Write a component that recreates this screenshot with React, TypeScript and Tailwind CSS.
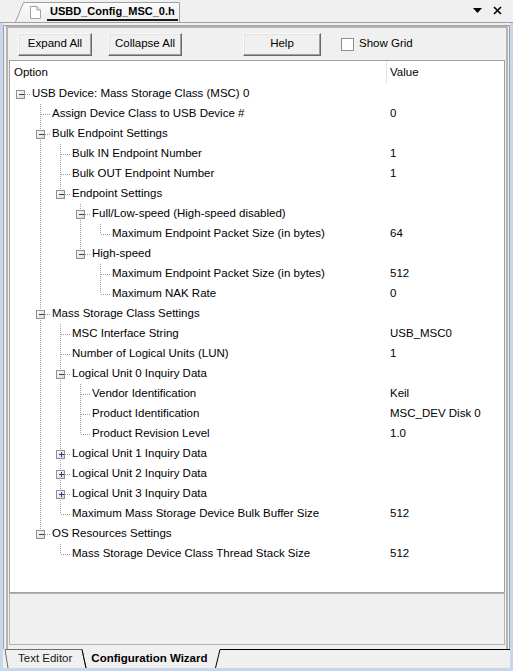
import React from "react";

type Row = { d: number; t: string; v?: string; e?: "-" | "+" };

const rows: Row[] = [
  { d: 0, t: "USB Device: Mass Storage Class (MSC) 0", e: "-" },
  { d: 1, t: "Assign Device Class to USB Device #", v: "0" },
  { d: 1, t: "Bulk Endpoint Settings", e: "-" },
  { d: 2, t: "Bulk IN Endpoint Number", v: "1" },
  { d: 2, t: "Bulk OUT Endpoint Number", v: "1" },
  { d: 2, t: "Endpoint Settings", e: "-" },
  { d: 3, t: "Full/Low-speed (High-speed disabled)", e: "-" },
  { d: 4, t: "Maximum Endpoint Packet Size (in bytes)", v: "64" },
  { d: 3, t: "High-speed", e: "-" },
  { d: 4, t: "Maximum Endpoint Packet Size (in bytes)", v: "512" },
  { d: 4, t: "Maximum NAK Rate", v: "0" },
  { d: 1, t: "Mass Storage Class Settings", e: "-" },
  { d: 2, t: "MSC Interface String", v: "USB_MSC0" },
  { d: 2, t: "Number of Logical Units (LUN)", v: "1" },
  { d: 2, t: "Logical Unit 0 Inquiry Data", e: "-" },
  { d: 3, t: "Vendor Identification", v: "Keil" },
  { d: 3, t: "Product Identification", v: "MSC_DEV Disk 0" },
  { d: 3, t: "Product Revision Level", v: "1.0" },
  { d: 2, t: "Logical Unit 1 Inquiry Data", e: "+" },
  { d: 2, t: "Logical Unit 2 Inquiry Data", e: "+" },
  { d: 2, t: "Logical Unit 3 Inquiry Data", e: "+" },
  { d: 2, t: "Maximum Mass Storage Device Bulk Buffer Size", v: "512" },
  { d: 1, t: "OS Resources Settings", e: "-" },
  { d: 2, t: "Mass Storage Device Class Thread Stack Size", v: "512" },
];

function hasNext(i: number): boolean {
  const d = rows[i].d;
  for (let j = i + 1; j < rows.length; j++) {
    if (rows[j].d < d) return false;
    if (rows[j].d === d) return true;
  }
  return false;
}

const meta = rows.map((r, i) => {
  const cols: boolean[] = [];
  for (let c = 1; c < r.d; c++) {
    let a = -1;
    for (let j = i - 1; j >= 0; j--) {
      if (rows[j].d === c) {
        a = j;
        break;
      }
    }
    cols.push(a >= 0 && hasNext(a));
  }
  return { ...r, next: hasNext(i), cols };
});

const LINE = "#a0a0a0";

function Connector({ m }: { m: (typeof meta)[number] }) {
  const w = 20 * (m.d + 1);
  const cx = 20 * m.d + 10;
  return (
    <svg width={w} height={20} className="shrink-0" shapeRendering="crispEdges">
      {m.cols.map((on, k) =>
        on ? (
          <line key={k} x1={20 * (k + 1) + 10.5} y1={0} x2={20 * (k + 1) + 10.5} y2={20} stroke={LINE} strokeDasharray="1 1" />
        ) : null
      )}
      {m.d > 0 && (
        <line x1={cx + 0.5} y1={0} x2={cx + 0.5} y2={m.next ? 20 : 10} stroke={LINE} strokeDasharray="1 1" />
      )}
      <line x1={cx + 1} y1={10.5} x2={w} y2={10.5} stroke={LINE} strokeDasharray="1 1" />
      {m.e && (
        <g>
          <defs>
            <linearGradient id="bx" x1="0" y1="0" x2="1" y2="1">
              <stop offset="0" stopColor="#ffffff" />
              <stop offset="1" stopColor="#d8d8d8" />
            </linearGradient>
          </defs>
          <rect x={cx - 3.5} y={6.5} width={8} height={8} fill="url(#bx)" stroke="#8e8f8f" />
          <line x1={cx - 1} y1={10.5} x2={cx + 4} y2={10.5} stroke="#1e3f7a" />
          {m.e === "+" && <line x1={cx + 1.5} y1={8} x2={cx + 1.5} y2={13} stroke="#1e3f7a" />}
        </g>
      )}
    </svg>
  );
}

function Btn({ children, w }: { children: React.ReactNode; w: string }) {
  return (
    <div
      className={`${w} flex h-[23px] items-center justify-center border border-t-[#f8f8f8] border-l-[#f8f8f8] border-r-[#696969] border-b-[#696969] bg-[#f0f0f0] shadow-[inset_-1px_-1px_0_#a0a0a0,inset_1px_1px_0_#e3e3e3]`}
    >
      {children}
    </div>
  );
}

export default function App() {
  return (
    <div
      className="relative flex h-[671px] w-[513px] flex-col overflow-hidden bg-[#f0f0f0] text-[11.5px] text-black"
      style={{ fontFamily: '"Liberation Sans", Arial, sans-serif' }}
    >
      {/* top tab strip */}
      <div className="relative flex h-[23px] shrink-0 items-end border-b border-[#a0a0a0] pl-[15px]">
        <div className="relative flex h-[20px] w-[165px] items-center pl-[15px]">
          <svg className="absolute left-0 top-0" width="165" height="20">
            <defs>
              <linearGradient id="tabg" x1="0" y1="0" x2="0" y2="1">
                <stop offset="0" stopColor="#fbfbfb" />
                <stop offset="1" stopColor="#eeeeee" />
              </linearGradient>
            </defs>
            <path d="M0.5 20 L8.5 0.5 L164.5 0.5 L164.5 20" fill="url(#tabg)" stroke="#a0a0a0" />
          </svg>
          <svg className="relative mr-[6px] shrink-0" width="11" height="13" viewBox="0 0 11 13">
            <path d="M0.5 0.5 H7 L10.5 4 V12.5 H0.5 Z" fill="#fff" stroke="#9aa3ae" />
            <path d="M7 0.5 V4 H10.5" fill="#e8edf3" stroke="#9aa3ae" />
          </svg>
          <span className="relative whitespace-nowrap border-b-2 border-[#1b1b1b] px-[3px] pb-[1px] text-[11px] font-bold leading-[14px]">
            USBD_Config_MSC_0.h
          </span>
        </div>
        <div className="absolute right-[11px] top-[6px] flex items-center gap-[11px]">
          <svg width="9" height="5" viewBox="0 0 9 5">
            <path d="M0 0 H9 L4.5 5 Z" fill="#000" />
          </svg>
          <svg width="9" height="9" viewBox="0 0 9 9">
            <path d="M1 1 L8 8 M8 1 L1 8" stroke="#000" strokeWidth="1.6" />
          </svg>
        </div>
      </div>

      {/* main panel */}
      <div className="flex flex-1 flex-col border-x-[3px] border-b-[3px] border-[#c8d7ee] pt-[2px]">
        <div className="flex flex-1 flex-col border-l border-r border-t border-[#a0a0a0] pl-[2px] pr-[1px]">
          <div className="flex flex-1 flex-col border-l-2 border-r-2 border-t-2 border-[#b4b4b4] px-[1px]">
            {/* toolbar */}
            <div className="flex h-[32px] shrink-0 items-center gap-[16px] pl-[9px]">
              <Btn w="w-[74px]">Expand All</Btn>
              <Btn w="w-[74px]">Collapse All</Btn>
              <div className="ml-[45px]">
                <Btn w="w-[78px]">Help</Btn>
              </div>
              <div className="ml-[4px] flex items-center gap-[5px]">
                <div className="h-[13px] w-[13px] border border-[#8f8f8f] bg-white" />
                <span>Show Grid</span>
              </div>
            </div>
            {/* tree */}
            <div className="flex h-[533px] shrink-0 flex-col border border-[#a0a0a0] bg-white">
              <div className="flex h-[23px] items-center">
                <div className="w-[376px] pl-[4px]">Option</div>
                <div className="h-full w-px bg-[#e5e5e5]" />
                <div className="pl-[3px]">Value</div>
              </div>
              {meta.map((m, i) => (
                <div key={i} className="flex h-[20px] items-center">
                  <div className="flex w-[376px] items-center">
                    <Connector m={m} />
                    <span className="ml-[2px] whitespace-nowrap">{m.t}</span>
                  </div>
                  <div className="pl-[4px]">{m.v ?? ""}</div>
                </div>
              ))}
            </div>
            {/* description */}
            <div className="h-[52px] shrink-0 border border-[#b4b4b4] bg-[#f0f0f0]" />
            <div className="flex-1" />
          </div>
        </div>
        {/* bottom tabs */}
        <div className="relative flex h-[19px] shrink-0 items-center">
          <svg className="absolute left-0 top-0" width="507" height="19">
            <path d="M2 0.5 L5 19 M2 0.5 H79 L83 19" fill="none" stroke="#6d6d6d" />
            <path d="M79 0.5 L83 19 M212.5 19 L217 0.5 H507" fill="none" stroke="#000" />
          </svg>
          <span className="relative ml-[15px] text-[#1a1a1a]">Text Editor</span>
          <span className="relative ml-[19px] font-bold">Configuration Wizard</span>
        </div>
      </div>
    </div>
  );
}
